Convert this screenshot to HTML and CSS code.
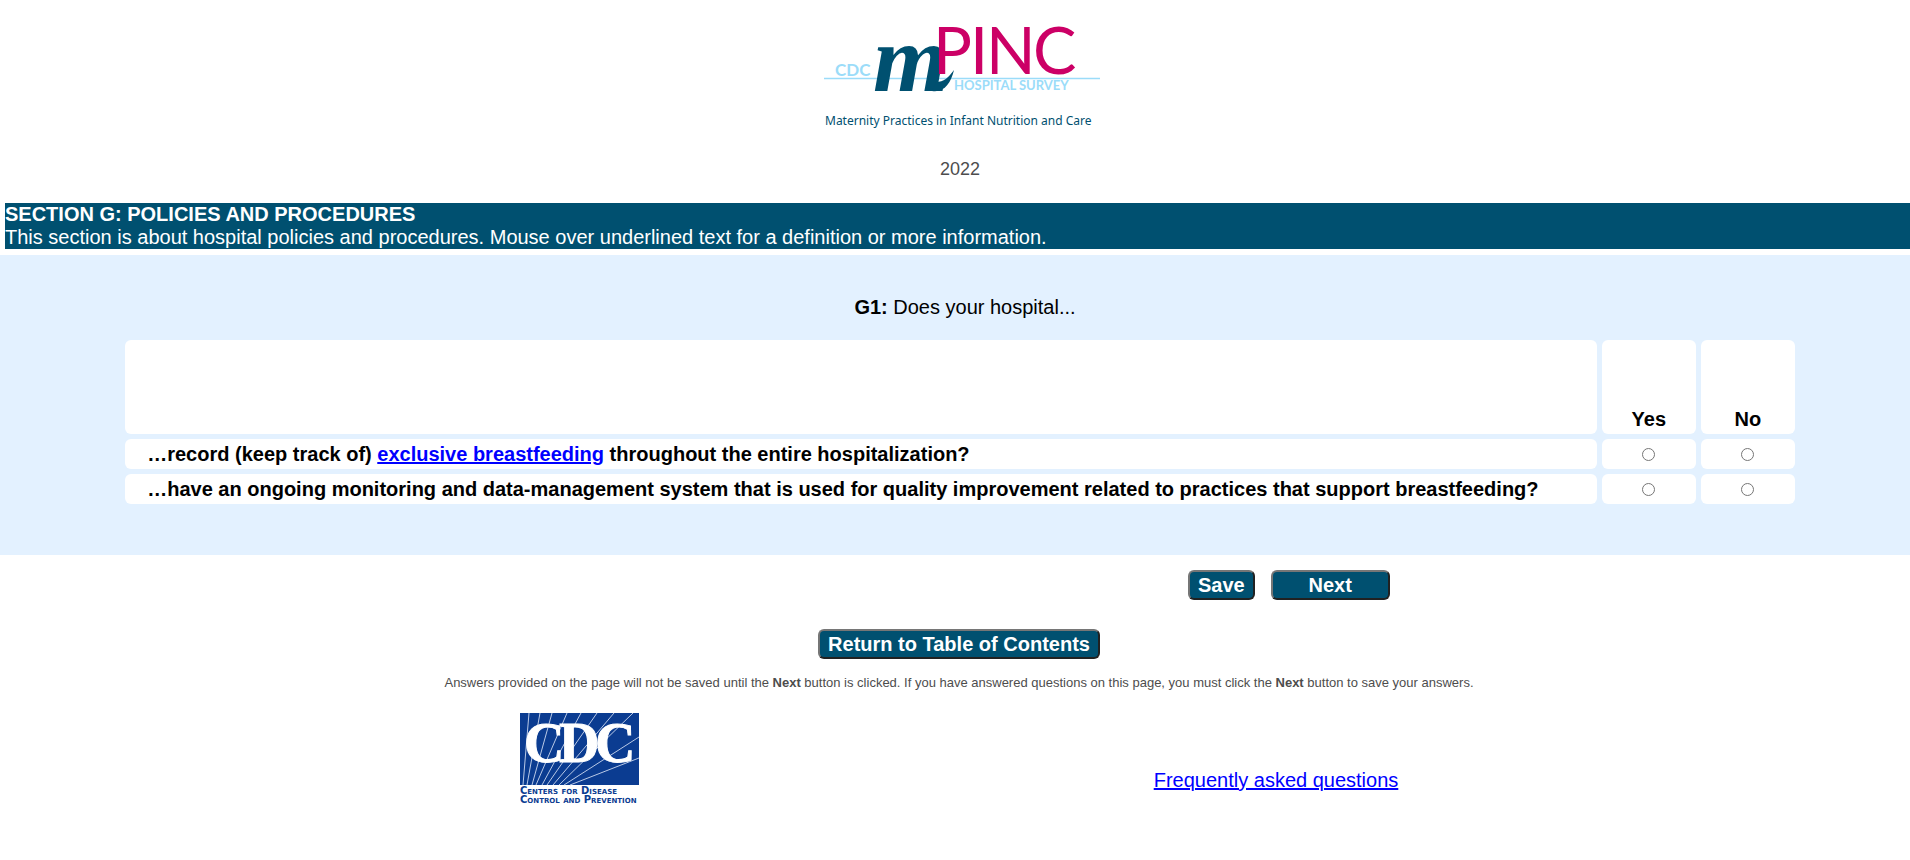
FILE: index.html
```html
<!DOCTYPE html>
<html lang="en">
<head>
    <meta charset="UTF-8">
    <meta name="viewport" content="width=device-width, initial-scale=1.0">
    <title>mPINC Hospital Survey</title>
    <link rel="stylesheet" href="styles.css">
</head>
<body>
    <header class="header">
        <svg class="logo" width="276" height="116" viewBox="2 0 276 116" role="img" aria-label="CDC mPINC Hospital Survey">
            <path d="M2 58.500H278" stroke="#9bdcf9" stroke-width="1.500"/>
            <text class="logo-light" x="13" y="56" font-size="17">CDC</text>
            <text class="logo-m" x="51" y="71" font-size="96">m</text>
            <!-- brush tail -->
            <path d="M110 71C122 73 129 63 132 50C126 58 122 62 114 62Z" fill="#005070"/>
            <text class="logo-pinc" x="111 148 164 211" y="54" font-size="65">PINC</text>
            <text class="logo-light" x="132" y="70" font-size="13">HOSPITAL SURVEY</text>
            <text class="logo-tagline" x="3" y="105" font-size="12">Maternity Practices in Infant Nutrition and Care</text>
        </svg>
        <p class="year">2022</p>
    </header>
    <div class="section-title">
        <h1>SECTION G: POLICIES AND PROCEDURES</h1>
        <p>This section is about hospital policies and procedures. Mouse over underlined text for a definition or more information.</p>
    </div>
    <form class="survey">
        <div class="question">
            <p class="question-text"><b>G1:</b> Does your hospital...</p>
            <table class="grid">
                <thead>
                    <tr>
                        <td></td>
                        <th scope="col" id="yes">Yes</th>
                        <th scope="col" id="no">No</th>
                    </tr>
                </thead>
                <tbody>
                    <tr>
                        <th scope="row" id="g1a">…record (keep track of) <a href="#" title="Definition of exclusive breastfeeding">exclusive breastfeeding</a> throughout the entire hospitalization?</th>
                        <td><input type="radio" name="g1a" value="1" aria-labelledby="g1a yes"></td>
                        <td><input type="radio" name="g1a" value="0" aria-labelledby="g1a no"></td>
                    </tr>
                    <tr>
                        <th scope="row" id="g1b">…have an ongoing monitoring and data-management system that is used for quality improvement related to practices that support breastfeeding?</th>
                        <td><input type="radio" name="g1b" value="1" aria-labelledby="g1b yes"></td>
                        <td><input type="radio" name="g1b" value="0" aria-labelledby="g1b no"></td>
                    </tr>
                </tbody>
            </table>
        </div>
        <div class="buttons">
            <button type="button" class="btn">Save</button>
            <button type="button" class="btn btn-next">Next</button>
        </div>
        <div class="contents">
            <button type="button" class="btn">Return to Table of Contents</button>
        </div>
        <p class="note">Answers provided on the page will not be saved until the <b>Next</b> button is clicked. If you have answered questions on this page, you must click the <b>Next</b> button to save your answers.</p>
    </form>
    <footer class="footer">
        <svg class="cdc" width="124" height="92" viewBox="0 0 124 92" role="img" aria-label="Centers for Disease Control and Prevention">
            <rect width="119" height="72" fill="#0b3c91"/>
            <!-- rays fanning out from the bottom left -->
            <path d="M3 72L9 0M7 72L20 0M12 72L32 0M16 72L47 0M22 72L61 0M27 72L77 0M33 72L94 0M39 72L113 0M44 72L119 24M50 72L119 45" stroke="#b9c9e6" stroke-width="1" fill="none"/>
            <text class="cdc-name" x="4 39 75" y="49" font-size="56">CDC</text>
            <text class="cdc-small" x="0" y="81" font-size="10">Centers for Disease</text>
            <text class="cdc-small" x="0" y="90" font-size="10">Control and Prevention</text>
        </svg>
        <a href="#">Frequently asked questions</a>
    </footer>
</body>
</html>
```
FILE: styles.css
```css
body {
    margin: 0;
    font-family: Arial, "Liberation Sans", sans-serif;
    font-size: 20px;
    line-height: 23px;
    color: black;
    background-color: white;
}
a {
    color: blue;
}
.header {
    padding: 20px 0 0 10px;
    text-align: center;
}
.logo {
    display: block;
    margin: 0 auto;
    padding-left: 4px;
    overflow: visible;
}
.logo-light {
    font-family: Lato, sans-serif;
    fill: #9bdcf9;
    font-weight: bold;
}
.logo-m {
    font-family: "Liberation Serif", serif;
    font-style: italic;
    font-weight: bold;
    fill: #005070;
}
.logo-pinc {
    font-family: Lato, sans-serif;
    fill: #cc0066;
}
.logo-tagline {
    font-family: "Noto Sans", sans-serif;
    fill: #005070;
}
.year {
    margin: 0;
    padding: 22px 0 22px;
    font-size: 18px;
    color: #4d4d4d;
}
.section-title {
    margin: 0 0 6px 5px;
    background-color: #005070;
    color: white;
}
.section-title h1,
.section-title p {
    margin: 0;
    font-size: 20px;
}
.question {
    padding: 41px 0 46px 10px;
    background-color: #e3f1ff;
}
.question-text {
    margin: 0 0 16px;
    padding-left: 10px;
    text-align: center;
}
.grid {
    width: 88.4%;
    margin: 0 auto;
    border-spacing: 5px;
}
.grid th,
.grid td {
    height: 30px;
    padding: 0;
    box-sizing: border-box;
    border-radius: 6px;
    background-color: white;
    text-align: center;
}
.grid thead th {
    width: 94px;
    height: 94px;
    padding-bottom: 3px;
    vertical-align: bottom;
}
.grid tbody th {
    padding: 0 22px;
    text-align: left;
}
.grid input {
    display: block;
    margin: 0 auto;
}
.buttons {
    display: flex;
    gap: 16px;
    padding: 15px 0 29px 62.2%;
}
.btn {
    height: 30px;
    padding: 1px 8px;
    border: 2px solid;
    border-color: #767676 #212121 #212121 #767676;
    border-radius: 6px;
    background-color: #005070;
    color: white;
    font-family: inherit;
    font-size: 20px;
    font-weight: bold;
    line-height: 23px;
}
.btn-next {
    width: 119px;
}
.contents {
    display: flex;
    justify-content: center;
    padding-left: 8px;
}
.note {
    margin: 12px 0 19px;
    padding-left: 8px;
    font-size: 13px;
    color: #4d4d4d;
    text-align: center;
}
.footer {
    display: flex;
    justify-content: space-between;
    align-items: center;
    width: 46%;
    margin: 0 auto;
    padding-left: 8px;
}
.footer a {
    padding-top: 42px;
}
.cdc-name {
    font-family: "Liberation Serif", serif;
    font-weight: bold;
    fill: white;
    stroke: white;
}
.cdc-small {
    font-family: "DejaVu Sans", sans-serif;
    font-weight: bold;
    font-variant: small-caps;
    fill: #0b3c91;
}
```
